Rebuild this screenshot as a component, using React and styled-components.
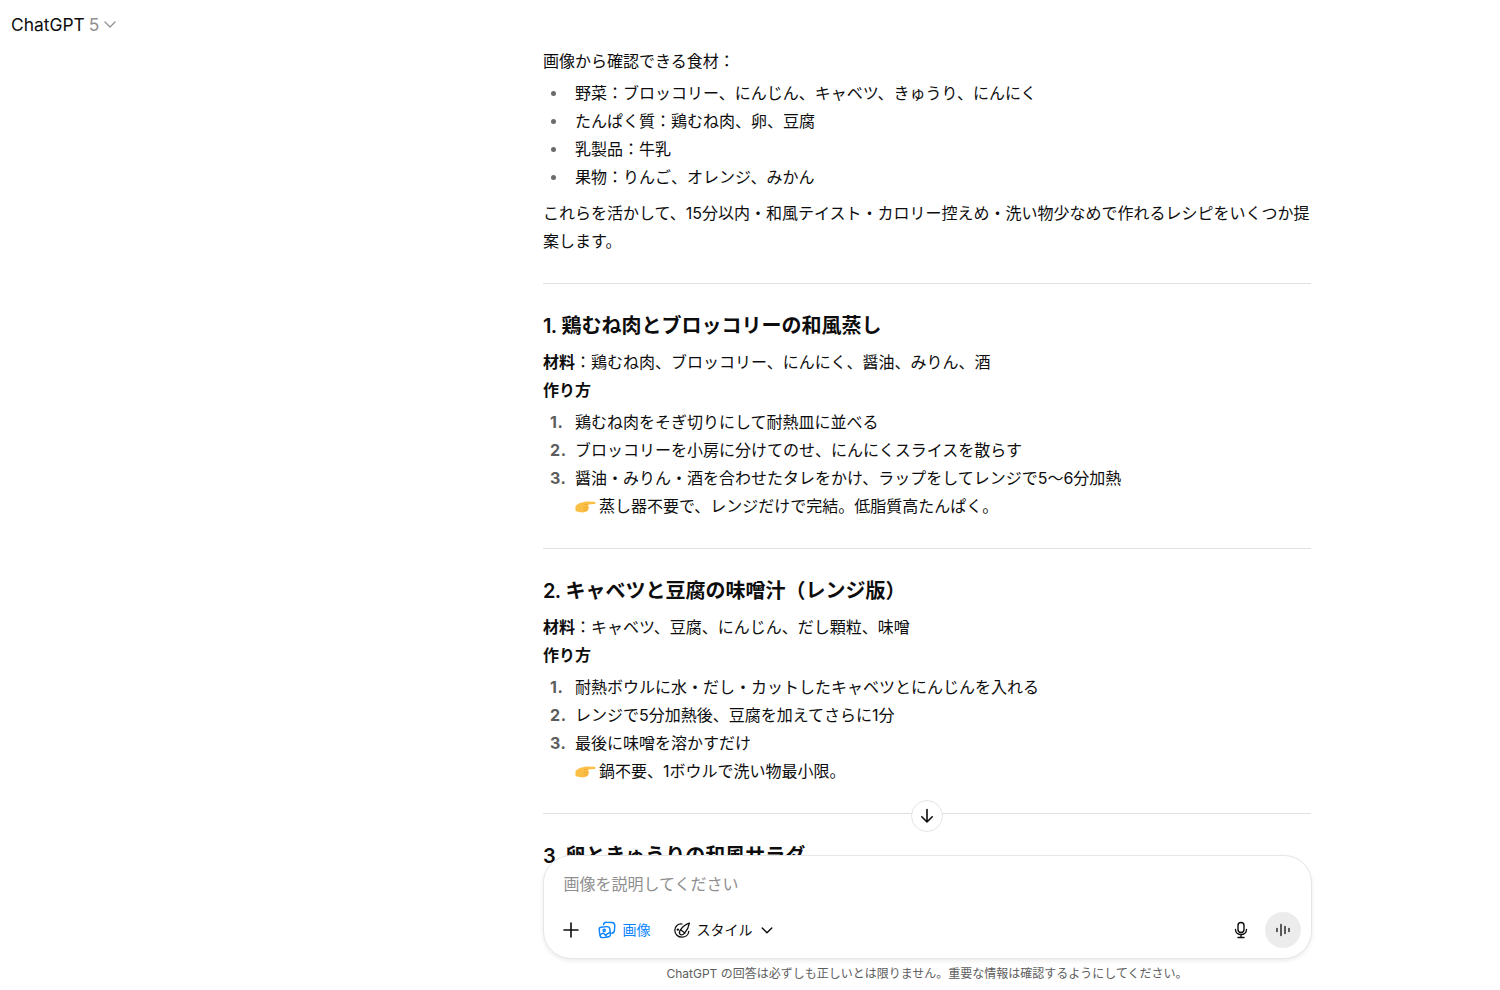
import React from 'react';
import styled, { createGlobalStyle } from 'styled-components';

const GlobalStyle = createGlobalStyle`
  html, body {
    margin: 0;
    padding: 0;
    background: #fff;
  }
  body {
    font-family: Inter, "Noto Sans CJK JP", sans-serif;
    color: #0d0d0d;
  }
`;

const Page = styled.div`
  width: 1500px;
  height: 990px;
  display: flex;
  flex-direction: column;
  overflow: hidden;
`;

const Header = styled.header`
  height: 47px;
  flex: none;
  display: flex;
  align-items: center;
  padding: 1px 0 0 11px;
  box-sizing: border-box;
  font-size: 17.4px;
`;

const ModelName = styled.span`
  color: #0d0d0d;
`;

const ModelVersion = styled.span`
  color: #8f8f8f;
  margin-left: 4px;
`;

const Main = styled.main`
  position: relative;
  flex: 1;
  overflow: hidden;
  padding-left: 354px;
`;

const Thread = styled.article`
  width: 768px;
  margin: 0 auto;
  font-size: 16px;
  line-height: 28px;
`;

const Para = styled.p`
  margin: 0 0 ${(p) => p.$after ?? 8}px;
`;

const Bullets = styled.ul`
  margin: 0 0 8px;
  padding: 0 0 0 32px;
  list-style: none;
`;

const BulletItem = styled.li`
  position: relative;
  &::before {
    content: '';
    position: absolute;
    left: -24px;
    top: 12px;
    width: 5px;
    height: 5px;
    border-radius: 50%;
    background: #6b6b6b;
  }
`;

const Rule = styled.hr`
  border: none;
  border-top: 1px solid #e0e0e0;
  margin: 28px 0 27px;
`;

const Heading = styled.h3`
  margin: 0 0 7px;
  font-size: 20px;
  line-height: 30px;
  font-weight: 600;
`;

const HeadingNumber = styled.span`
  letter-spacing: -0.7px;
`;

const Steps = styled.ol`
  margin: 4px 0 0;
  padding: 0 0 0 32px;
  list-style: none;
`;

const Step = styled.li`
  position: relative;
`;

const StepNumber = styled.span`
  position: absolute;
  left: -25px;
  font-weight: 700;
  letter-spacing: 0.6px;
  color: #5d5d5d;
`;

const Note = styled.span`
  display: flex;
  align-items: center;
  gap: 3px;
`;

const ScrollButton = styled.button`
  position: absolute;
  left: 911px;
  top: 753px;
  width: 32px;
  height: 32px;
  padding: 0;
  border: 1px solid #e5e5e5;
  border-radius: 50%;
  background: #fff;
  display: flex;
  align-items: center;
  justify-content: center;
  color: #0d0d0d;
`;

const Dock = styled.div`
  position: absolute;
  left: 354px;
  right: 0;
  bottom: 0;
  display: flex;
  flex-direction: column;
  align-items: center;
`;

const Composer = styled.div`
  box-sizing: border-box;
  width: 769px;
  height: 104px;
  padding: 18px 10px 10px 20px;
  background: #fff;
  border: 1px solid #e6e6e6;
  border-radius: 28px;
  box-shadow: 0 2px 4px rgba(0, 0, 0, 0.08);
  display: flex;
  flex-direction: column;
  justify-content: space-between;
`;

const Placeholder = styled.div`
  font-size: 16px;
  line-height: 20px;
  color: #8f8f8f;
`;

const Tools = styled.div`
  display: flex;
  align-items: center;
  height: 36px;
  margin-left: -2px;
`;

const ToolButton = styled.div`
  display: flex;
  align-items: center;
  font-size: 14px;
  line-height: 16px;
  color: ${(p) => (p.$active ? '#0a84ff' : '#0d0d0d')};
  margin-left: ${(p) => p.$gap || 0}px;
  gap: ${(p) => p.$inner || 6}px;
`;

const Spacer = styled.div`
  flex: 1;
`;

const VoiceButton = styled.div`
  width: 36px;
  height: 36px;
  margin-left: 15px;
  border-radius: 50%;
  background: #ececec;
  display: flex;
  align-items: center;
  justify-content: center;
`;

const Disclaimer = styled.div`
  height: 31px;
  font-size: 12px;
  line-height: 29px;
  color: #5d5d5d;
`;

const HandEmoji = () => (
  <svg width="21" height="14" viewBox="0 0 21 14" fill="none">
    <path d="M0.5 7 C3 4.6 5 3.6 7 3.4 L11 2.6 L19.6 2.7 C20.8 3 20.8 4.8 19.6 5 L13.2 5.6 L13.8 9 C13.6 11.6 11 13.4 8 13.4 C5 13.4 2.5 12.8 0.5 12 Z" fill="#fbbf45" />
    <path d="M9 5.6 L13 5.6 M8.6 8.4 L13.4 8.4 M8.4 10.8 L12.8 10.8" stroke="#eaa22f" strokeWidth="0.7" />
  </svg>
);

const sections = [
  {
    number: '1.',
    title: ' 鶏むね肉とブロッコリーの和風蒸し',
    materials: '鶏むね肉、ブロッコリー、にんにく、醤油、みりん、酒',
    steps: [
      '鶏むね肉をそぎ切りにして耐熱皿に並べる',
      'ブロッコリーを小房に分けてのせ、にんにくスライスを散らす',
      '醤油・みりん・酒を合わせたタレをかけ、ラップをしてレンジで5〜6分加熱',
    ],
    note: '蒸し器不要で、レンジだけで完結。低脂質高たんぱく。',
  },
  {
    number: '2.',
    title: ' キャベツと豆腐の味噌汁（レンジ版）',
    materials: 'キャベツ、豆腐、にんじん、だし顆粒、味噌',
    steps: [
      '耐熱ボウルに水・だし・カットしたキャベツとにんじんを入れる',
      'レンジで5分加熱後、豆腐を加えてさらに1分',
      '最後に味噌を溶かすだけ',
    ],
    note: '鍋不要、1ボウルで洗い物最小限。',
  },
];

const foods = [
  '野菜：ブロッコリー、にんじん、キャベツ、きゅうり、にんにく',
  'たんぱく質：鶏むね肉、卵、豆腐',
  '乳製品：牛乳',
  '果物：りんご、オレンジ、みかん',
];

export default function App() {
  return (
    <Page lang="ja">
      <GlobalStyle />
      <Header>
        <ModelName>ChatGPT</ModelName>
        <ModelVersion>5</ModelVersion>
        <svg width="16" height="16" viewBox="0 0 16 16" fill="none" style={{ marginLeft: 3 }}>
          <path d="M3 6 L8 11 L13 6" stroke="#8f8f8f" strokeWidth="1.3" strokeLinecap="round" strokeLinejoin="round" />
        </svg>
      </Header>
      <Main>
        <Thread>
          <Para $after={4}>画像から確認できる食材：</Para>
          <Bullets>
            {foods.map((f) => (
              <BulletItem key={f}>{f}</BulletItem>
            ))}
          </Bullets>
          <Para>
            これらを活かして、15分以内・和風テイスト・カロリー控えめ・洗い物少なめで作れるレシピをいくつか提案します。
          </Para>
          {sections.map((s) => (
            <section key={s.title}>
              <Rule />
              <Heading>
                <HeadingNumber>{s.number}</HeadingNumber>
                {s.title}
              </Heading>
              <Para $after={0}>
                <strong>材料</strong>：{s.materials}
                <br />
                <strong>作り方</strong>
              </Para>
              <Steps>
                {s.steps.map((step, i) => (
                  <Step key={step}>
                    <StepNumber>{i + 1}.</StepNumber>
                    {step}
                    {i === s.steps.length - 1 && (
                      <Note>
                        <HandEmoji />
                        {s.note}
                      </Note>
                    )}
                  </Step>
                ))}
              </Steps>
            </section>
          ))}
          <Rule />
          <Heading>
            <HeadingNumber>3.</HeadingNumber> 卵ときゅうりの和風サラダ
          </Heading>
        </Thread>
        <ScrollButton aria-label="scroll down">
          <svg width="20" height="20" viewBox="0 0 20 20" fill="none">
            <path d="M10 3.5 V16 M4.8 10.8 L10 16 L15.2 10.8" stroke="#0d0d0d" strokeWidth="1.6" strokeLinecap="round" strokeLinejoin="round" />
          </svg>
        </ScrollButton>
        <Dock>
          <Composer>
            <Placeholder>画像を説明してください</Placeholder>
            <Tools>
              <ToolButton>
                <svg width="18" height="18" viewBox="0 0 18 18" fill="none">
                  <path d="M9 2 V16 M2 9 H16" stroke="#0d0d0d" strokeWidth="1.6" strokeLinecap="round" />
                </svg>
              </ToolButton>
              <ToolButton $active $gap={18} $inner={7}>
                <svg width="18" height="18" viewBox="0 0 18 18" fill="none" stroke="#0a84ff" strokeWidth="1.4" strokeLinejoin="round" strokeLinecap="round">
                  <path d="M2.8 6.3 L9 5.6 C10.5 5.5 11.6 6.4 11.8 7.8 L12.4 13 C12.6 14.5 11.6 15.8 10.1 16 L5 16.6 C3.5 16.8 2.2 15.8 2 14.3 L1.2 9 C1 7.5 1.6 6.5 2.8 6.3 Z" />
                  <path d="M5.5 3.6 C5.8 2.2 7 1.2 8.5 1.3 L13.5 1.5 C15.4 1.6 16.8 3 16.8 4.8 L16.4 9.6 C16.3 11 15.3 12 13.8 12.2" />
                  <circle cx="6.2" cy="9.4" r="1.1" />
                  <path d="M2 13.8 L5.2 12 L8.6 15.2 M8 13.6 L12 11.4" />
                </svg>
                画像
              </ToolButton>
              <ToolButton $gap={22}>
                <svg width="18" height="18" viewBox="0 0 18 18" fill="none" stroke="#0d0d0d" strokeWidth="1.25" strokeLinecap="round" strokeLinejoin="round">
                  <path d="M9 3 C5 2.4 1.8 5.4 1.8 9.2 C1.8 13.2 5 16.2 9 16.2 C12.6 16.2 15.4 13.8 15.8 10.4" />
                  <path d="M16.4 2.2 C13 3.2 10 5.4 7.6 8.6 C6.4 10.2 6 12 7 13.2 C8.2 14.4 10.2 13.8 11.6 12.2 C14 9.4 15.8 5.8 16.4 2.2 Z" />
                  <path d="M7.4 8.6 L11.8 12" />
                  <circle cx="4.8" cy="8.6" r="0.6" />
                </svg>
                スタイル
                <svg width="14" height="14" viewBox="0 0 14 14" fill="none" style={{ marginLeft: 1 }}>
                  <path d="M2.2 5 L7 9.8 L11.8 5" stroke="#0d0d0d" strokeWidth="1.4" strokeLinecap="round" strokeLinejoin="round" />
                </svg>
              </ToolButton>
              <Spacer />
              <svg width="18" height="18" viewBox="0 0 18 18" fill="none" stroke="#0d0d0d" strokeWidth="1.4" strokeLinecap="round">
                <rect x="6" y="1.5" width="6" height="10" rx="3" />
                <path d="M3.5 8.5 C3.5 11.5 6 13.5 9 13.5 C12 13.5 14.5 11.5 14.5 8.5 M9 13.5 V16.5 M6 16.5 H12" />
              </svg>
              <VoiceButton>
                <svg width="16" height="16" viewBox="0 0 16 16" fill="none" stroke="#0d0d0d" strokeWidth="1.3" strokeLinecap="round">
                  <path d="M2 6.5 V9.5 M6 2.5 V13.5 M10 4.5 V11.5 M14 6.5 V9.5" />
                </svg>
              </VoiceButton>
            </Tools>
          </Composer>
          <Disclaimer>ChatGPT の回答は必ずしも正しいとは限りません。重要な情報は確認するようにしてください。</Disclaimer>
        </Dock>
      </Main>
    </Page>
  );
}
